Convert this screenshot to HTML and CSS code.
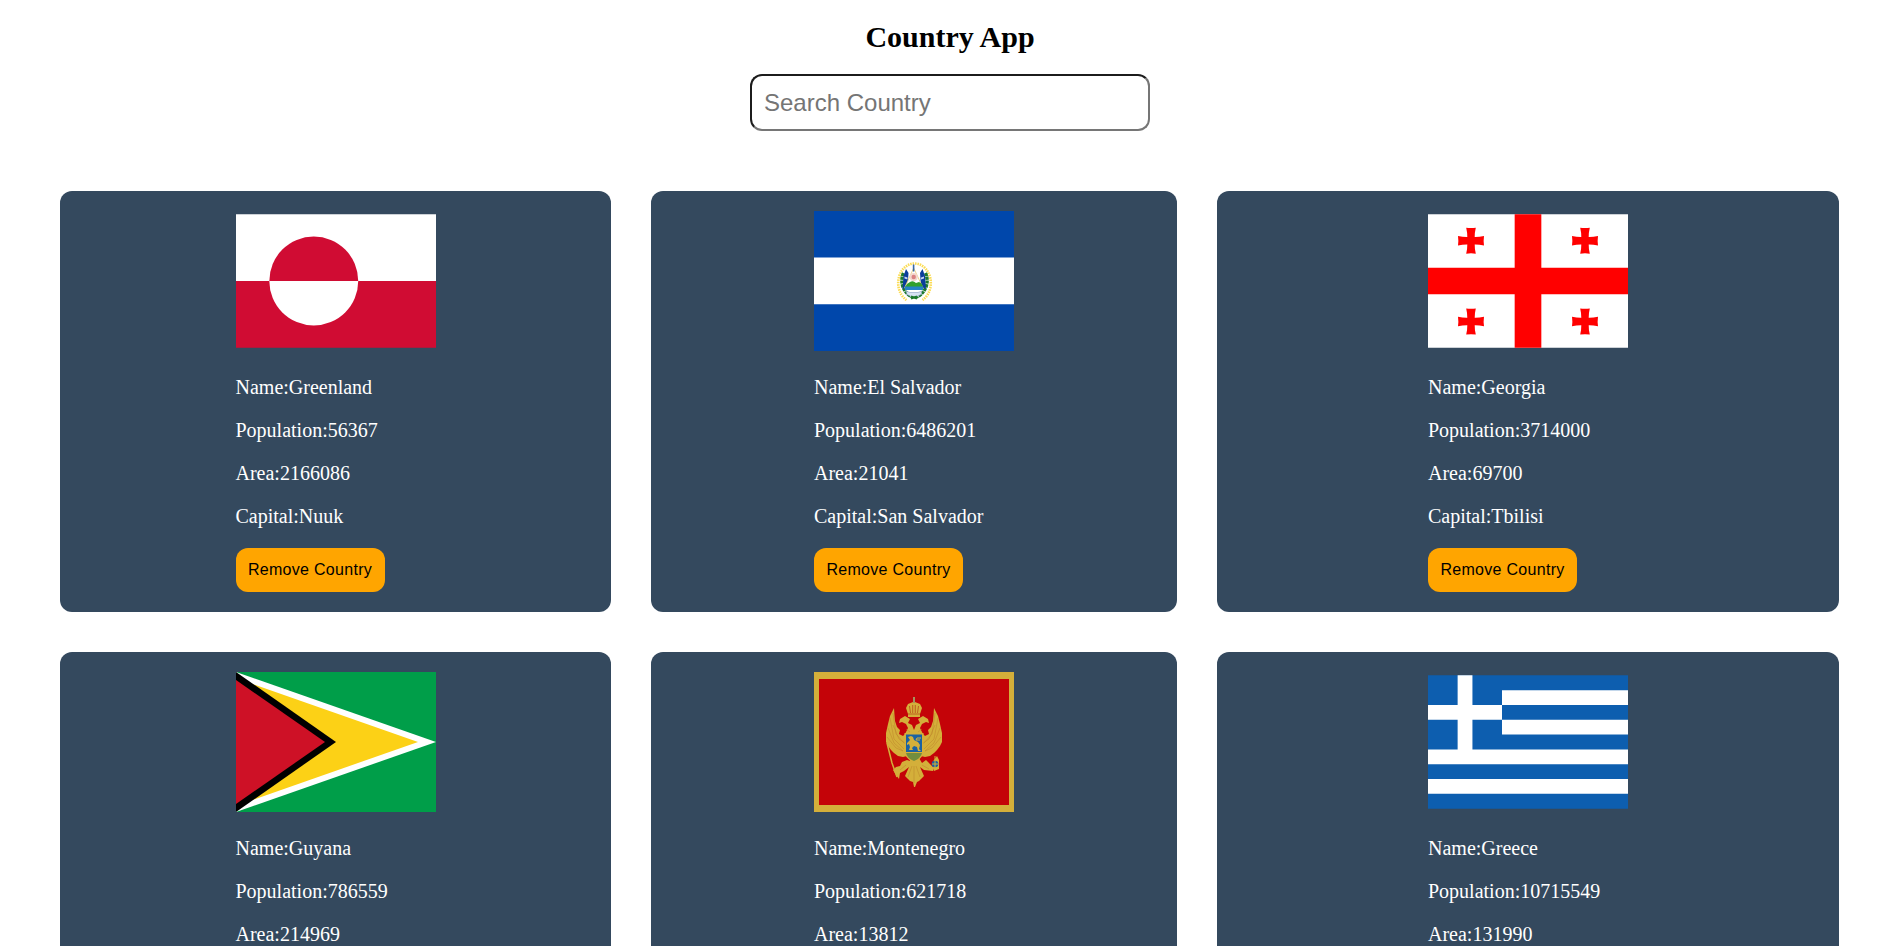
FILE: index.html
```html
<!DOCTYPE html>
<html lang="en">
<head>
<meta charset="utf-8">
<title>Country App</title>
<link rel="stylesheet" href="styles.css">
</head>
<body>
<header class="header">
  <h1 class="title">Country App</h1>
  <input class="search" type="text" placeholder="Search Country">
</header>
<main class="countries">
  <article class="card"><div class="info">
    <svg class="flag" viewBox="0 0 200 140">
      <path fill="#fff" d="M0 3.33h200V70H0z"/><path fill="#d00c33" d="M0 70h200v66.67H0z"/>
      <path fill="#d00c33" d="M33.33 70a44.44 44.44 0 0 1 88.89 0z"/><path fill="#fff" d="M33.33 70a44.44 44.44 0 0 0 88.89 0z"/>
    </svg>
    <p>Name:Greenland</p><p>Population:56367</p><p>Area:2166086</p><p>Capital:Nuuk</p>
    <button class="remove">Remove Country</button>
  </div></article>

  <article class="card"><div class="info">
    <svg class="flag" viewBox="0 0 200 140">
      <path fill="#0047ab" d="M0 0h200v140H0z"/><path fill="#fff" d="M0 46.5h200v46.700H0z"/>
      <!-- motto ring -->
      <path d="M92.500 89A16.300 19.500 0 1 1 108.500 89" fill="none" stroke="#fbdc55" stroke-width="2.600" stroke-dasharray="1.500 .9"/>
      <!-- laurel -->
      <path d="M89.500 62q-3 7-.5 14 3.500 8 9.500 10M111.500 62q3 7 .5 14-3.500 8-9.500 10" fill="none" stroke="#1d7a2c" stroke-width="3.400" stroke-dasharray="3.200 .6"/>
      <!-- side flags -->
      <path fill="#0b3d9c" d="M92 58l2.500 4-1 14-5 2 1-13zM108.500 58l-2.500 4 1 14 5 2-1-13z"/>
      <path fill="#c5d4f2" d="M90.500 65.500l3 1v2l-3-1zM110 65.500l-3 1v2l3-1z"/>
      <!-- triangle -->
      <path fill="#fff" stroke="#e6c96c" stroke-width=".8" d="M99.700 57L109 77H90.500z"/>
      <circle cx="99.700" cy="66" r="4" fill="#f3d7cd"/><circle cx="99.700" cy="66" r="2.200" fill="#d98282"/>
      <path stroke="#3465a8" stroke-width="1.600" d="M99.600 53.500v7"/>
      <path fill="#33a02c" d="M91 76q2-4 5-5 3-2 6 1l3-1q3 1 4 5z"/><path fill="#2683c6" d="M90.500 75.500h18.500v3.500H91z"/>
      <!-- ribbon -->
      <path fill="#d8e3f4" stroke="#7893bd" stroke-width=".5" d="M92 80l4 1.500h8l4-1.500-1 3.500-4 2h-6l-4-2z"/>
      <path stroke="#1d7a2c" stroke-width="2" d="M97 87.500l6-2m-6 0l6 2"/>
    </svg>
    <p>Name:El Salvador</p><p>Population:6486201</p><p>Area:21041</p><p>Capital:San Salvador</p>
    <button class="remove">Remove Country</button>
  </div></article>

  <article class="card"><div class="info">
    <svg class="flag" viewBox="0 0 200 140">
      <path fill="#fff" d="M0 3.33h200v133.34H0z"/>
      <path fill="red" d="M86.670 3.330h26.660v133.340H86.670zM0 56.670h200v26.660H0z"/>
      <defs><path id="cross" fill="red" d="M-4.800-13Q0-12.300 4.800-13 3.600-8 3.700-3.700 8-3.600 13-4.800 12.300 0 13 4.800 8 3.600 3.700 3.700 3.600 8 4.800 13 0 12.300-4.800 13-3.600 8-3.700 3.700-8 3.600-13 4.800-12.300 0-13-4.800-8-3.600-3.700-3.700-3.600-8-4.800-13z"/></defs>
      <use href="#cross" x="43" y="29.700"/><use href="#cross" x="157" y="29.700"/><use href="#cross" x="43" y="110.500"/><use href="#cross" x="157" y="110.500"/>
    </svg>
    <p>Name:Georgia</p><p>Population:3714000</p><p>Area:69700</p><p>Capital:Tbilisi</p>
    <button class="remove">Remove Country</button>
  </div></article>

  <article class="card"><div class="info">
    <svg class="flag" viewBox="0 0 200 140">
      <path fill="#009e49" d="M0 0h200v140H0z"/><path fill="#fff" d="M0 0l200 70L0 140z"/>
      <path fill="#fcd116" d="M0 6.300L182 70 0 133.700z"/><path fill="#000" d="M0 0l100 70L0 140z"/>
      <path fill="#ce1126" d="M0 8l89 62-89 62z"/>
    </svg>
    <p>Name:Guyana</p><p>Population:786559</p><p>Area:214969</p>
  </div></article>

  <article class="card"><div class="info">
    <svg class="flag" viewBox="0 0 200 140">
      <path fill="#d4af3a" d="M0 0h200v140H0z"/><path fill="#c40308" d="M5 7h190v126H5z"/>
      <g fill="#d4af3a">
        <!-- wings -->
        <path id="wing" d="M80 36l-4 8-2 8-2 9 0 9 2 4 3 4 3 3 4 3 5 1 4-1V60l-4 4-4-2 1-4-3-3-2-6-.5-6z"/>
        <use href="#wing" transform="matrix(-1 0 0 1 200 0)"/>
        <!-- heads and neck -->
        <path d="M100 58l-2-5-4-2 2-4-5-3-5 3-1 4 3-1 4 2 2 4-3 6 9 3 9-3-3-6 2-4 4-2 3 1-1-4-5-3-5 3 2 4-4 2z"/>
        <!-- crown -->
        <path d="M99 25h2v5l5 2 2 4-2 6v3H94v-3l-2-6 2-4 5-2z"/>
        <!-- tail and legs -->
        <path d="M95 86h10l3 5 4-3 8 8-1 3-9-1-4-3 4 9-3 3-2 2-2 1-2 5-1 0-1-5-3-1-2-2-3-3 4-9-5 4-4 2-1 6-3-4-3-5 3-3 4-1 2-4 5-2 3 1z"/>
        <path d="M120 99l5-2V88l-2-4-3 4-2 3z"/>
      </g>
      <g fill="none" stroke="#b98028" stroke-width=".45">
        <path id="feathers" d="M79 41l3 21 9 10M76 46l4 21 10 10M74 56l6 15 9 8M73 65l9 11 7 3M79 53l6 14 6 4"/>
        <use href="#feathers" transform="matrix(-1 0 0 1 200 0)"/>
        <path d="M94 105l4-11M100 111V94M106 105l-4-11M92 93l-6 5M108 93l7 4M92 57l4 3M108 57l-4 3"/>
      </g>
      <path d="M94 42h12M95.500 34l1 7M98.700 33v8M101.300 33v8M104.500 34l-1 7" fill="none" stroke="#b84a1b" stroke-width=".8"/>
      <path d="M100 25v6" stroke="#8a8371" stroke-width="1.300"/>
      <path d="M73 71l5 20 5 14" fill="none" stroke="#d4af3a" stroke-width="1.500"/>
      <path fill="#d4af3a" d="M90.500 61h19v21q-2 5-9.500 8-7.500-3-9.500-8z"/>
      <path fill="#1a61a2" d="M92 62.500h16V80H92z"/><path fill="#728d3d" d="M92 81h16q-1 5-8 8-7-3-8-8z"/>
      <path d="M94 65l3-1 2 1 1 3 4 2 2 3-1 4 2 2h-3l-1-4-3-1-2 2 1 2h-4l1-3-1-3-2 1v-2l3-3z" fill="#d4af3a"/>
      <path d="M106 68h-4l1-2h4" fill="none" stroke="#d4af3a"/>
      <circle cx="121" cy="92" r="3.300" fill="#1a61a2"/><path d="M121 84v12M118 92h6" stroke="#d4af3a" stroke-width="1"/>
    </svg>
    <p>Name:Montenegro</p><p>Population:621718</p><p>Area:13812</p>
  </div></article>

  <article class="card"><div class="info">
    <svg class="flag" viewBox="0 0 200 140">
      <path fill="#0d5eaf" d="M0 3.33h200v133.34H0z"/>
      <path fill="#fff" d="M74 18.150h126v14.810H74zM74 47.780h126v14.810H74zM0 77.410h200v14.810H0zM0 107.040h200v14.810H0zM29.630 3.330h14.810v74.080H29.630zM0 32.960h74v14.820H0z"/>
    </svg>
    <p>Name:Greece</p><p>Population:10715549</p><p>Area:131990</p>
  </div></article>
</main>
</body>
</html>
```
FILE: styles.css
```css
* { box-sizing: border-box; margin: 0; padding: 0; }

body {
  height: 100vh;
  overflow: hidden;
  background: #fff;
  font-family: "Liberation Serif", "Times New Roman", serif;
}

.header {
  display: flex;
  flex-direction: column;
  align-items: center;
  padding: 20px 0 0 2px;
}

.title {
  font-size: 30px;
  line-height: 34px;
  margin-bottom: 20px;
}

.search {
  width: 400px;
  height: 57px;
  padding: 12px;
  border: 2px solid;
  border-color: #1c1c1c #767676 #767676 #1c1c1c;
  border-radius: 12px;
  font: 24px "Liberation Sans", Arial, sans-serif;
}

.search::placeholder { color: #757575; }

.countries {
  display: grid;
  grid-template-columns: 551fr 526fr 622fr;
  grid-auto-rows: 421px;
  gap: 40px;
  padding: 60px 59px 0 60px;
}

.card {
  display: flex;
  justify-content: center;
  padding: 20px;
  border-radius: 12px;
  background: #34495e;
  color: #fff;
  font-size: 20px;
  line-height: 23px;
}

.info { width: 200px; }

.flag {
  display: block;
  width: 200px;
  height: 140px;
  margin-bottom: 25px;
}

.info p { margin-bottom: 20px; }

.remove {
  display: block;
  width: 149px;
  height: 44px;
  border: 0;
  border-radius: 12px;
  background: orange;
  color: #000;
  font: 16px "Liberation Sans", Arial, sans-serif;
  letter-spacing: 0.3px;
}
```
